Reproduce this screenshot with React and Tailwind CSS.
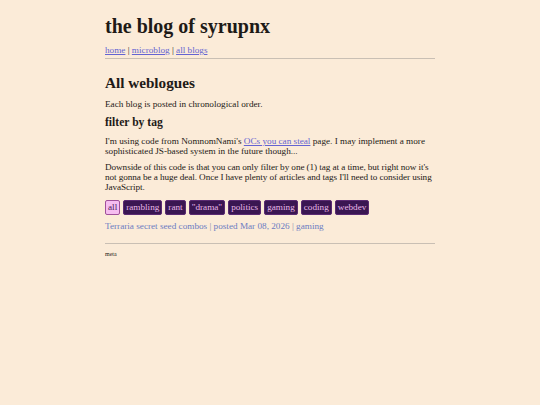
export default function App() {
  const tags = ["rambling", "rant", "\"drama\"", "politics", "gaming", "coding", "webdev"];
  return (
    <div className="min-h-[405px] w-full bg-[#fbebd8] text-[#1e1a17]" style={{ fontFamily: '"Liberation Serif", "Times New Roman", serif' }}>
      <div className="mx-auto w-[330px] pt-[14px]">
        <h1 className="text-[20px] font-bold leading-[24px]">the blog of syrupnx</h1>
        <nav className="mt-[7px] text-[9.2px] leading-[10px]">
          <a className="text-[#6464d2] underline">home</a> | <a className="text-[#6464d2] underline">microblog</a> | <a className="text-[#6464d2] underline">all blogs</a>
        </nav>
        <hr className="mt-[3px] border-t border-[#c9bfb4]" />
        <h2 className="mt-[15px] text-[15.2px] font-bold leading-[18px]">All weblogues</h2>
        <p className="mt-[7px] text-[9.2px] leading-[10px]">Each blog is posted in chronological order.</p>
        <h3 className="mt-[7px] text-[11.6px] font-bold leading-[14px]">filter by tag</h3>
        <p className="mt-[6px] text-[9.2px] leading-[10px]">
          I'm using code from NomnomNami's <a className="text-[#6464d2] underline">OCs you can steal</a> page. I may implement a more sophisticated JS-based system in the future though...
        </p>
        <p className="mt-[6px] text-[9.2px] leading-[10px] tracking-[-0.08px]">
          Downside of this code is that you can only filter by one (1) tag at a time, but right now it's not gonna be a huge deal. Once I have plenty of articles and tags I'll need to consider using JavaScript.
        </p>
        <div className="mt-[8px] flex gap-[3px] text-[9.2px] leading-[13px]">
          <span className="rounded-[2px] border border-[#a0509a] bg-[#f6bdf0] px-[2px] text-[#4a1a5a]">all</span>
          {tags.map((t) => (
            <span key={t} className="rounded-[2px] border border-[#5a2a72] bg-[#3a1652] px-[2px] text-[#e8b8e8]">{t}</span>
          ))}
        </div>
        <div className="mt-[6px] text-[9.2px] leading-[10px] text-[#6c7cc2]">
          <a>Terraria secret seed combos</a> <span className="text-[#8a8aa8]">|</span> posted Mar 08, 2026 <span className="text-[#8a8aa8]">|</span> <a>gaming</a>
        </div>
        <hr className="mt-[12px] border-t border-[#c9bfb4]" />
        <p className="mt-[7px] text-[6px] leading-[7px]">meta</p>
      </div>
    </div>
  );
}
